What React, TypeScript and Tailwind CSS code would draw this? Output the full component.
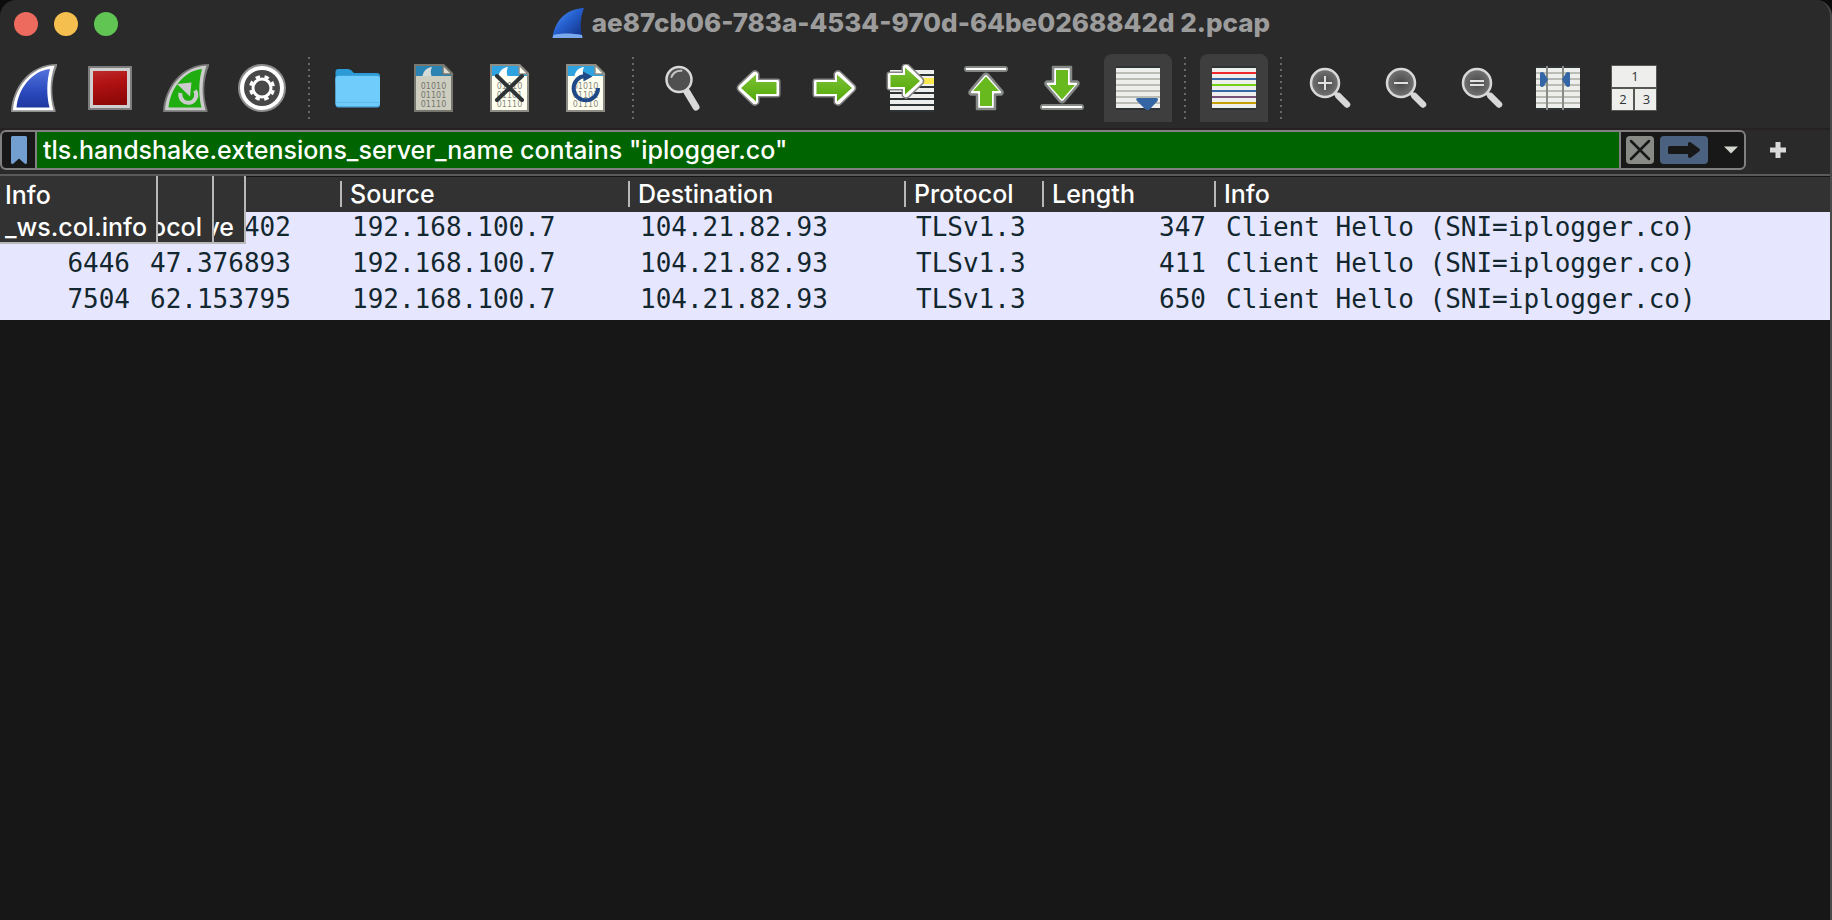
import React from "react";

type IconProps = { children: React.ReactNode };

function Icon({ children }: IconProps) {
  return (
    <svg viewBox="0 0 48 48" className="size-12 shrink-0" aria-hidden="true">
      {children}
    </svg>
  );
}

function ToolButton({ label, active, children }: { label: string; active?: boolean; children: React.ReactNode }) {
  return (
    <button
      type="button"
      aria-label={label}
      className={
        active
          ? "flex size-17 shrink-0 items-center justify-center rounded-t-lg bg-[#3e3e3e]"
          : "flex size-17 shrink-0 items-center justify-center"
      }
    >
      <Icon>{children}</Icon>
    </button>
  );
}

function Separator() {
  return (
    <svg viewBox="0 0 12 62" className="h-[62px] w-3 shrink-0" aria-hidden="true">
      <path d="M5 0V62" stroke="#686868" strokeWidth="2" strokeDasharray="2 4" />
    </svg>
  );
}

const FIN_EDGE = "M1 48C2 24 19 0 47 0V2C41 17 41 31 45.500 46V48Z";
const FIN_RIM = "M3 46.200C4.500 24 21 2.500 44.500 1.800C39.500 16 39.500 32 43.500 46.200Z";
const FIN_BODY = "M6.500 43.500C8.500 24 22 7 40 5C36.500 17 36.500 32 39.500 43.500Z";

function StartIcon() {
  return (
    <>
      <defs>
        <linearGradient id="blueFin" x1="0" y1="0" x2="0" y2="1">
          <stop offset="0" stopColor="#5273dc" />
          <stop offset="0.6" stopColor="#2a49bd" />
          <stop offset="1" stopColor="#2038a0" />
        </linearGradient>
      </defs>
      <path d={FIN_EDGE} fill="#8e8e8e" />
      <path d={FIN_RIM} fill="#fff" />
      <path d={FIN_BODY} fill="url(#blueFin)" />
    </>
  );
}

function StopIcon() {
  return (
    <>
      <defs>
        <linearGradient id="redBox" x1="0" y1="0" x2="0.200" y2="1">
          <stop offset="0" stopColor="#bb2c2c" />
          <stop offset="0.4" stopColor="#b21212" />
          <stop offset="1" stopColor="#8e0808" />
        </linearGradient>
      </defs>
      <rect x="2" y="2" width="44" height="44" fill="#7d7d7d" />
      <rect x="4" y="4" width="40" height="40" fill="#cfcfcf" />
      <rect x="7" y="7" width="34" height="34" fill="url(#redBox)" />
    </>
  );
}

function RestartIcon() {
  return (
    <>
      <path d={FIN_EDGE} fill="#777" />
      <path d={FIN_RIM} fill="#ccc" />
      <path d={FIN_BODY} fill="#1fad10" />
      <path d="M18.500 29A8 8 0 1 0 33 26.500" fill="none" stroke="#ccc" strokeWidth="4" />
      <path d="M15 20L29.500 18.500L28 32.500Z" fill="#ccc" />
    </>
  );
}

function OptionsIcon() {
  return (
    <>
      <circle cx="24" cy="24" r="24" fill="#8e8e8e" />
      <circle cx="24" cy="24" r="22" fill="#fff" />
      <circle cx="24" cy="24" r="18" fill="#484848" />
      <circle cx="24" cy="24" r="9" fill="none" stroke="#fff" strokeWidth="3" />
      <circle cx="24" cy="24" r="11.500" fill="none" stroke="#fff" strokeWidth="3" strokeDasharray="4.500 4.531" transform="rotate(11 24 24)" />
    </>
  );
}

function FolderIcon() {
  return (
    <>
      <path d="M1.500 8Q1.500 5 4.500 5H14Q16 5 17.500 6.500L20 9H43Q46 9 46 12V20H1.500Z" fill="#2b9ad6" />
      <rect x="1.500" y="11.500" width="44.500" height="32" rx="3" fill="#4dabe2" />
      <rect x="1.500" y="12" width="44.500" height="30" rx="3" fill="#70ccfa" />
      <path d="M2 38.500H45.500" stroke="#5ebdf0" strokeWidth="1" />
    </>
  );
}

function BinaryDoc({ dim }: { dim?: boolean }) {
  const sky = dim ? "#2b83b4" : "#2fa3df";
  const paper = dim ? "#cdcdc0" : "#fffff0";
  const edge = dim ? "#77776f" : "#8d8d86";
  return (
    <>
      <path d="M4 0H34L43 9V48H4Z" fill={edge} />
      <path d="M6 2H33L41 10V46H6Z" fill={paper} />
      <path d="M6 2H33V12H6Z" fill={sky} />
      <path d="M33 9H41V12H33Z" fill={sky} />
      <path d="M12.500 12C13.500 7 17 3.500 22 3C20.500 6 20.500 9 21.500 12Z" fill={dim ? "#d6dbd6" : "#fff"} />
      <path d="M33 1V10H42Z" fill={dim ? "#dddccf" : "#fffff0"} stroke={edge} strokeWidth="1.500" />
      <g fill={dim ? "#77776f" : "#8a8a80"} fontFamily="DejaVu Sans" fontSize="8" textAnchor="middle">
        <text x="23.500" y="24.500">01010</text>
        <text x="23.500" y="33.500">01101</text>
        <text x="23.500" y="42.500">01110</text>
      </g>
    </>
  );
}

function FindIcon() {
  return (
    <>
      <path d="M29 28L38 43" stroke="#d8d8d8" strokeWidth="7" strokeLinecap="round" />
      <path d="M25 24L29 30" stroke="#d8d8d8" strokeWidth="4" />
      <circle cx="21" cy="15.500" r="12.500" fill="#505050" stroke="#d8d8d8" strokeWidth="2.500" />
      <path d="M13.500 13C15 9 18 6.500 23.500 6.800" fill="none" stroke="#c4c4c4" strokeWidth="2" strokeLinecap="round" />
    </>
  );
}

function GreenArrow({ transform, short }: { transform?: string; short?: boolean }) {
  const outline = short
    ? "M10.500 17.500H25.500V10Q27 8.500 28.500 10L41.500 22.500Q43 24 41.500 25.500L28.500 38Q27 39.500 25.500 38V30.500H10.500Z"
    : "M4.500 17.500H25.500V10Q27 8.500 28.500 10L41.500 22.500Q43 24 41.500 25.500L28.500 38Q27 39.500 25.500 38V30.500H4.500Z";
  const body = short
    ? "M11.500 18H26V10.500L41 24L26 37.500V30H11.500Z"
    : "M5.500 18H26V10.500L41 24L26 37.500V30H5.500Z";
  return (
    <g transform={transform}>
      <path d={outline} fill="#858585" stroke="#858585" strokeWidth="6" strokeLinejoin="round" />
      <path d={outline} fill="#fff" stroke="#fff" strokeWidth="3" strokeLinejoin="round" />
      <path d={body} fill="url(#greenArrow)" />
    </g>
  );
}

function VerticalArrow({ down }: { down?: boolean }) {
  return (
    <g transform={down ? "rotate(180 24 24)" : undefined}>
      <rect x="2" y="2" width="44" height="6" rx="3" fill="#858985" />
      <rect x="4" y="4" width="40" height="2" fill="#fff" />
      <path d="M15 45V30.500H9Q6.500 29.500 8 27L22 10.500Q24 9 26 10.500L40 27Q41.500 29.500 39 30.500H33V45Z" fill="#fff" stroke="#858985" strokeWidth="2.500" strokeLinejoin="round" />
      <path d="M18 42V27H11L24 12.500L37 27H30V42Z" fill="#68b91d" />
    </g>
  );
}

function Lines({ colors }: { colors: string[] }) {
  return (
    <>
      <rect x="2" y="2" width="44" height="44" fill="#2e3436" />
      <rect x="2" y="4" width="44" height="40" fill="#eeeeec" />
      {colors.map((c, i) => (
        <rect key={i} x="2" y={8 + i * 6} width="44" height="2" fill={c} />
      ))}
    </>
  );
}

const GREY_LINES = ["#babdb6", "#babdb6", "#babdb6", "#babdb6", "#babdb6", "#babdb6"];
const COLOR_LINES = ["#ef2929", "#3465a4", "#73d216", "#3465a4", "#75507b", "#c4a000"];

function ZoomIcon({ sign }: { sign: string }) {
  return (
    <>
      <defs>
        <radialGradient id="lens">
          <stop offset="0" stopColor="#484848" />
          <stop offset="1" stopColor="#747474" />
        </radialGradient>
      </defs>
      <path d="M28 28L33 33" stroke="#d8d8d8" strokeWidth="4" />
      <path d="M32.500 32L41 40.500" stroke="#d8d8d8" strokeWidth="6.500" strokeLinecap="round" />
      <circle cx="19" cy="19" r="14" fill="url(#lens)" stroke="#d8d8d8" strokeWidth="2.500" />
      <path d={sign} stroke="#e0e0e0" strokeWidth="2" />
    </>
  );
}

function Toolbar() {
  return (
    <div role="toolbar" aria-label="Main toolbar" className="flex h-20 items-center gap-2 overflow-hidden">
      <ToolButton label="Start capture"><StartIcon /></ToolButton>
      <ToolButton label="Stop capture"><StopIcon /></ToolButton>
      <ToolButton label="Restart capture"><RestartIcon /></ToolButton>
      <ToolButton label="Capture options"><OptionsIcon /></ToolButton>
      <Separator />
      <ToolButton label="Open file"><FolderIcon /></ToolButton>
      <ToolButton label="Save file"><BinaryDoc dim /></ToolButton>
      <ToolButton label="Close file">
        <BinaryDoc />
        <path d="M11 12L36 36M36 12L11 36" stroke="#2e3436" strokeWidth="4" strokeLinecap="round" />
      </ToolButton>
      <ToolButton label="Reload file">
        <BinaryDoc />
        <path d="M36 24A12.200 12.200 0 1 1 23 12" fill="none" stroke="#204a87" strokeWidth="4" />
        <path d="M21 7.500L30.500 12.500L21.500 17.500Z" fill="#204a87" />
      </ToolButton>
      <Separator />
      <ToolButton label="Find packet"><FindIcon /></ToolButton>
      <ToolButton label="Previous packet">
        <defs>
          <linearGradient id="greenArrow" x1="0" y1="0" x2="0" y2="1">
            <stop offset="0" stopColor="#7cc236" />
            <stop offset="1" stopColor="#53a808" />
          </linearGradient>
        </defs>
        <GreenArrow transform="matrix(-1 0 0 1 48 0)" />
      </ToolButton>
      <ToolButton label="Next packet"><GreenArrow transform="translate(1 0)" /></ToolButton>
      <ToolButton label="Go to packet">
        <rect x="4" y="6" width="44" height="42" fill="#2e3436" />
        {[6, 12, 18, 24, 30, 36, 42].map((y) => (
          <rect key={y} x="4" y={y} width="44" height="4" fill="#eeeeec" />
        ))}
        <rect x="28" y="14" width="20" height="6" fill="#fce94f" />
        <GreenArrow short transform="translate(-7 -7)" />
      </ToolButton>
      <ToolButton label="First packet"><VerticalArrow /></ToolButton>
      <ToolButton label="Last packet"><VerticalArrow down /></ToolButton>
      <ToolButton label="Auto scroll" active>
        <Lines colors={GREY_LINES} />
        <path d="M24 34H42Q45 34 43.500 37L36 45Q33.500 47 31 45L23 37Q21 34 24 34Z" fill="#3465a4" />
      </ToolButton>
      <Separator />
      <ToolButton label="Colorize packets" active><Lines colors={COLOR_LINES} /></ToolButton>
      <Separator />
      <ToolButton label="Zoom in"><ZoomIcon sign="M12 19H26M19 12V26" /></ToolButton>
      <ToolButton label="Zoom out"><ZoomIcon sign="M12 19H26" /></ToolButton>
      <ToolButton label="Normal size"><ZoomIcon sign="M12 17H26M12 21H26" /></ToolButton>
      <ToolButton label="Resize columns">
        <Lines colors={GREY_LINES} />
        <path d="M13 2V46M29 2V46" stroke="#888a85" strokeWidth="2" />
        <path d="M6 9Q8 7 10 9L14 15.500L10 22Q8 24 6 22ZM36 9Q34 7 32 9L28 15.500L32 22Q34 24 36 22Z" fill="#3465a4" />
      </ToolButton>
      <ToolButton label="Reset layout">
        <rect x="1" y="1" width="46" height="46" fill="#555753" />
        <rect x="2" y="2" width="44" height="21" fill="#eeeeec" />
        <rect x="2" y="25" width="21" height="21" fill="#eeeeec" />
        <rect x="25" y="25" width="21" height="21" fill="#eeeeec" />
        <g fill="#2e3436" fontFamily="Open Sans" fontSize="13" textAnchor="middle">
          <text x="25" y="17">1</text>
          <text x="13" y="40">2</text>
          <text x="36.500" y="40">3</text>
        </g>
      </ToolButton>
    </div>
  );
}

function TitleBar() {
  return (
    <header className="flex h-12 items-center px-3.5">
      <div className="flex shrink-0 gap-4">
        <button type="button" aria-label="Close" className="size-6 rounded-full bg-[#ed6a5e]" />
        <button type="button" aria-label="Minimize" className="size-6 rounded-full bg-[#f5bf4f]" />
        <button type="button" aria-label="Full screen" className="size-6 rounded-full bg-[#61c554]" />
      </div>
      <div className="flex min-w-0 flex-1 items-center justify-center gap-2 pr-28 pb-0.5">
        <svg viewBox="0 0 32 32" className="size-8 shrink-0" aria-hidden="true">
          <defs>
            <linearGradient id="titleFin" x1="0" y1="0" x2="1" y2="1">
              <stop offset="0" stopColor="#5b9af5" />
              <stop offset="0.450" stopColor="#2560d0" />
              <stop offset="1" stopColor="#102a78" />
            </linearGradient>
          </defs>
          <path d="M0.500 31C3 14 13 2 32 1C28 11 28 21 30.500 31Z" fill="url(#titleFin)" />
          <path d="M1.500 28C8 26 20 26 30 28L30.500 31H0.500Z" fill="#7ba9ee" />
        </svg>
        <h1 className="truncate text-[26px] leading-8 font-extrabold text-[#9c9c9c]">
          ae87cb06-783a-4534-970d-64be0268842d 2.pcap
        </h1>
      </div>
    </header>
  );
}

function FilterBar() {
  return (
    <div className="flex items-center gap-6 border-t-2 border-[#262224] pb-1">
      <div className="flex h-10 flex-1 items-stretch overflow-hidden rounded-md border-2 border-[#808080] bg-[#181818]">
        <button type="button" aria-label="Filter bookmarks" className="flex w-[33px] shrink-0 items-center justify-center">
          <svg viewBox="0 0 16 28" className="h-7 w-4" aria-hidden="true">
            <path d="M0 1.500Q0 0 1.500 0H14.500Q16 0 16 1.500V27Q15 28.500 13.500 27.500L8 22.500L2.500 27.500Q1 28.500 0 27Z" fill="#729fcf" />
          </svg>
        </button>
        <input
          type="text"
          aria-label="Display filter"
          defaultValue={'tls.handshake.extensions_server_name contains "iplogger.co"'}
          className="min-w-0 flex-1 border-x-2 border-[#808080] bg-[#006400] px-1.5 text-[25px] leading-8 font-medium text-white outline-none"
        />
        <div className="flex shrink-0 items-center gap-1.5 pr-1.5 pl-[5px]">
          <button type="button" aria-label="Clear filter" className="size-7 rounded bg-[#888a85]">
            <svg viewBox="0 0 28 28" className="size-7" aria-hidden="true">
              <path d="M5 5L23 23M23 5L5 23" stroke="#181818" strokeWidth="2.500" strokeLinecap="round" />
            </svg>
          </button>
          <button type="button" aria-label="Apply filter" className="h-7 w-12 rounded bg-[#4a6280]">
            <svg viewBox="0 0 48 28" className="h-7 w-12" aria-hidden="true">
              <path d="M9.500 10H28V7Q29.500 5.500 31 6.500L39 12.500Q41 14 39 15.500L31 21.500Q29.500 22.500 28 21V18H9.500Q8 18 8 16.500V11.500Q8 10 9.500 10Z" fill="#181818" />
            </svg>
          </button>
          <button type="button" aria-label="Filter history" className="flex h-7 w-6 items-center justify-end">
            <svg viewBox="0 0 14 8" className="h-2 w-3.5" aria-hidden="true">
              <path d="M0 0.500H14L7 7.500Z" fill="#d3d7cf" />
            </svg>
          </button>
        </div>
      </div>
      <button type="button" aria-label="Add filter button" className="mr-11 shrink-0">
        <svg viewBox="0 0 16 16" className="size-4" aria-hidden="true">
          <path d="M8 0V16M0 8H16" stroke="#dadada" strokeWidth="5" />
        </svg>
      </button>
    </div>
  );
}

const COLUMNS = ["No.", "Time", "Source", "Destination", "Protocol", "Length", "Info"];

const PACKETS = [
  { no: "6432", time: "47.369402", length: "347" },
  { no: "6446", time: "47.376893", length: "411" },
  { no: "7504", time: "62.153795", length: "650" },
];

function PacketList() {
  return (
    <div className="relative border-t-2 border-[#5a5a5a]">
      <table className="w-full table-fixed border-collapse">
        <colgroup>
          <col className="w-[140px]" />
          <col className="w-[200px]" />
          <col className="w-[288px]" />
          <col className="w-[276px]" />
          <col className="w-[138px]" />
          <col className="w-[172px]" />
          <col />
        </colgroup>
        <thead>
          <tr className="h-9 bg-[#323232] text-left text-[25px] leading-[26px] text-white">
            {COLUMNS.map((name, i) => (
              <th key={i} scope="col" className="p-0 font-medium shadow-[inset_0_1px_0_#151515]">
                <div className={i === 0 ? "pl-2" : "border-l-2 border-[#b8b8b8] pl-2"}>{name}</div>
              </th>
            ))}
          </tr>
        </thead>
        <tbody className="bg-[#e6e6ff] font-['DejaVu_Sans_Mono',monospace] text-[26px] leading-[30px] text-[#12272e]">
          {PACKETS.map((p) => (
            <tr key={p.no} className="h-9 align-top whitespace-nowrap">
              <td className="p-0 pr-2.5 text-right">{p.no}</td>
              <td className="p-0 pl-2.5">{p.time}</td>
              <td className="p-0 pl-3">192.168.100.7</td>
              <td className="p-0 pl-3">104.21.82.93</td>
              <td className="p-0 pl-3">TLSv1.3</td>
              <td className="p-0 pr-2 text-right">{p.length}</td>
              <td className="p-0 pl-3">Client Hello (SNI=iplogger.co)</td>
            </tr>
          ))}
        </tbody>
      </table>
      <div className="absolute top-0 left-0 flex h-17 border-b-2 border-[#b8b8b8] bg-[#323232] text-[25px] leading-[30px] font-medium text-white">
        <div className="flex w-[158px] flex-col justify-end gap-0.5 border-r-2 border-[#b8b8b8] pl-[5px]">
          <p>Info</p>
          <p>_ws.col.info</p>
        </div>
        <div className="flex w-14 items-end justify-end overflow-hidden border-r-2 border-[#b8b8b8] pr-2.5">
          <p>ocol</p>
        </div>
        <div className="flex w-8 items-end justify-end overflow-hidden border-r-2 border-[#b8b8b8] pr-2.5">
          <p>ve</p>
        </div>
      </div>
    </div>
  );
}

export default function App() {
  return (
    <div className="min-h-screen bg-[#0c0c0c] font-['Inter',sans-serif]">
      <div className="flex min-h-screen flex-col overflow-hidden rounded-t-2xl border-r-2 border-[#4a4a4a] bg-[#2a2a2a]">
        <TitleBar />
        <Toolbar />
        <FilterBar />
        <main className="flex-1 bg-[#171717]">
          <PacketList />
        </main>
      </div>
    </div>
  );
}
